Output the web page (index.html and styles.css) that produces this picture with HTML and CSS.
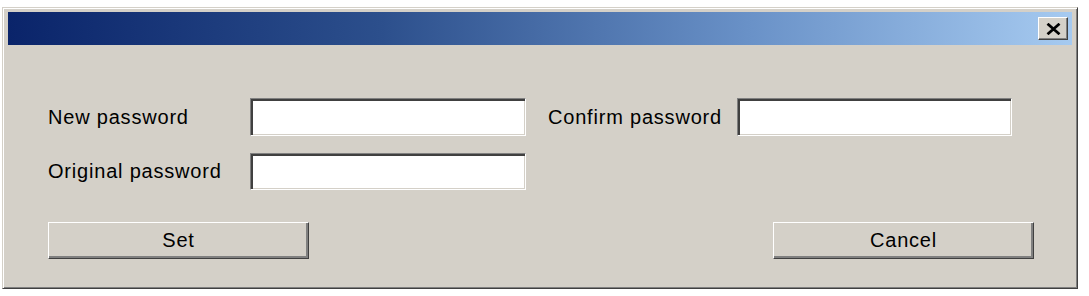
FILE: index.html
```html
<!DOCTYPE html>
<html>
<head>
<meta charset="utf-8">
<link rel="stylesheet" href="styles.css">
</head>
<body>
<div class="window">
  <div class="titlebar">
    <button class="close" aria-label="Close">
      <svg width="15" height="12" viewBox="0 0 15 12"><path d="M1.5 0.8 L13.5 11.2 M13.5 0.8 L1.5 11.2" stroke="#000" stroke-width="2.8" fill="none"/></svg>
    </button>
  </div>
  <div class="form">
    <span class="label">New password</span>
    <input class="field" type="password">
    <span></span>
    <span class="label">Confirm password</span>
    <input class="field" type="password">
    <span class="label">Original password</span>
    <input class="field" type="password">
  </div>
  <div class="actions">
    <button class="btn">Set</button>
    <button class="btn">Cancel</button>
  </div>
</div>
</body>
</html>
```
FILE: styles.css
```css
html, body {
  margin: 0;
  padding: 0;
  background: #ffffff;
}
body {
  font-family: "Liberation Sans", Arial, sans-serif;
}
.window {
  box-sizing: border-box;
  margin: 7px 0 0 2px;
  width: 1076px;
  height: 282px;
  background: #d4d0c8;
  border-style: solid;
  border-width: 1px;
  border-color: #d4d0c8 #404040 #404040 #d4d0c8;
  box-shadow: inset 1px 1px 0 #ffffff, inset -1px -1px 0 #808080;
  padding: 4px 5px 0 5px;
  display: flex;
  flex-direction: column;
}
.titlebar {
  height: 33px;
  background: linear-gradient(to right, #0a246a 0%, #2c4f8c 35%, #6a92c8 70%, #a6caf0 100%);
  display: flex;
  justify-content: flex-end;
  align-items: flex-start;
  padding: 5px 4px 0 0;
  box-sizing: border-box;
}
.close {
  width: 30px;
  height: 23px;
  padding: 0;
  margin: 0;
  background: #d4d0c8;
  border-style: solid;
  border-width: 1px;
  border-color: #ffffff #404040 #404040 #ffffff;
  box-shadow: inset -1px -1px 0 #808080;
  display: flex;
  align-items: center;
  justify-content: center;
}
.form {
  margin-top: 53px;
  padding-left: 40px;
  display: grid;
  grid-template-columns: 202px 276px 22px 189px 275px;
  grid-template-rows: 38px 37px;
  row-gap: 17px;
  align-items: center;
}
.label {
  font-size: 20px;
  letter-spacing: 0.8px;
  color: #000;
  white-space: nowrap;
}
.field {
  box-sizing: border-box;
  height: 100%;
  width: 100%;
  margin: 0;
  padding: 0 4px;
  background: #ffffff;
  border-style: solid;
  border-width: 1px;
  border-color: #808080 #ffffff #ffffff #808080;
  box-shadow: inset 2px 2px 0 #404040, inset -1px -1px 0 #d4d0c8;
  outline: none;
}
.actions {
  margin-top: 32px;
  padding: 0 38px 0 40px;
  display: flex;
  justify-content: space-between;
}
.btn {
  box-sizing: border-box;
  width: 261px;
  height: 37px;
  margin: 0;
  padding: 0;
  background: #d4d0c8;
  font-family: "Liberation Sans", Arial, sans-serif;
  font-size: 20px;
  letter-spacing: 0.8px;
  color: #000;
  border-style: solid;
  border-width: 1px;
  border-color: #ffffff #404040 #404040 #ffffff;
  box-shadow: inset -2px -2px 0 #808080;
}
```
